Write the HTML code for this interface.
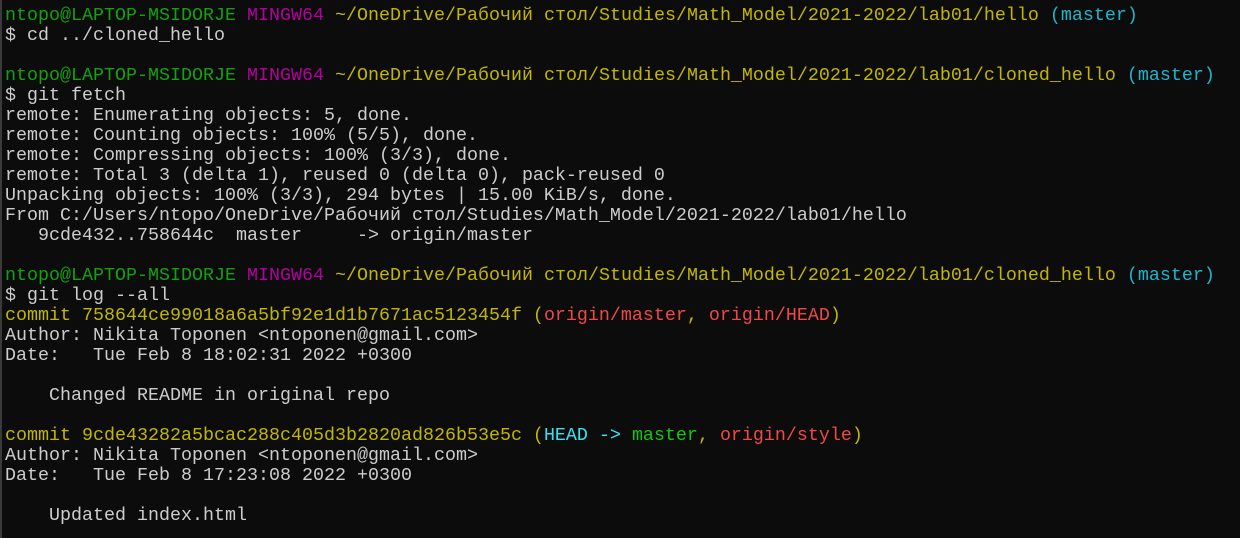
<!DOCTYPE html><html><head><style>
body{margin:0;background:#0c0c0c;width:1240px;height:538px;overflow:hidden;border-left:2px solid #3a3a3a;box-sizing:border-box}
pre{margin:0;padding:6px 0 0 3px;font-family:"Liberation Mono","DejaVu Sans Mono",monospace;font-size:18.33px;line-height:20px;color:#cccccc}
.g{color:#13a10e}.m{color:#b4009e}.y{color:#c1b600}.c{color:#1fb5c9}.r{color:#f04848}.bg{color:#16c60c}.bc{color:#3be0f0}
</style></head><body><pre><span class="g">ntopo@LAPTOP-MSIDORJE</span> <span class="m">MINGW64</span> <span class="y">~/OneDrive/Рабочий стол/Studies/Math_Model/2021-2022/lab01/hello</span> <span class="c">(master)</span>
$ cd ../cloned_hello

<span class="g">ntopo@LAPTOP-MSIDORJE</span> <span class="m">MINGW64</span> <span class="y">~/OneDrive/Рабочий стол/Studies/Math_Model/2021-2022/lab01/cloned_hello</span> <span class="c">(master)</span>
$ git fetch
remote: Enumerating objects: 5, done.
remote: Counting objects: 100% (5/5), done.
remote: Compressing objects: 100% (3/3), done.
remote: Total 3 (delta 1), reused 0 (delta 0), pack-reused 0
Unpacking objects: 100% (3/3), 294 bytes | 15.00 KiB/s, done.
From C:/Users/ntopo/OneDrive/Рабочий стол/Studies/Math_Model/2021-2022/lab01/hello
   9cde432..758644c  master     -&gt; origin/master

<span class="g">ntopo@LAPTOP-MSIDORJE</span> <span class="m">MINGW64</span> <span class="y">~/OneDrive/Рабочий стол/Studies/Math_Model/2021-2022/lab01/cloned_hello</span> <span class="c">(master)</span>
$ git log --all
<span class="y">commit 758644ce99018a6a5bf92e1d1b7671ac5123454f (<span class="r">origin/master</span>, <span class="r">origin/HEAD</span>)</span>
Author: Nikita Toponen &lt;ntoponen@gmail.com&gt;
Date:   Tue Feb 8 18:02:31 2022 +0300

    Changed README in original repo

<span class="y">commit 9cde43282a5bcac288c405d3b2820ad826b53e5c (<span class="bc">HEAD -&gt; </span><span class="bg">master</span>, <span class="r">origin/style</span>)</span>
Author: Nikita Toponen &lt;ntoponen@gmail.com&gt;
Date:   Tue Feb 8 17:23:08 2022 +0300

    Updated index.html
</pre></body></html>
